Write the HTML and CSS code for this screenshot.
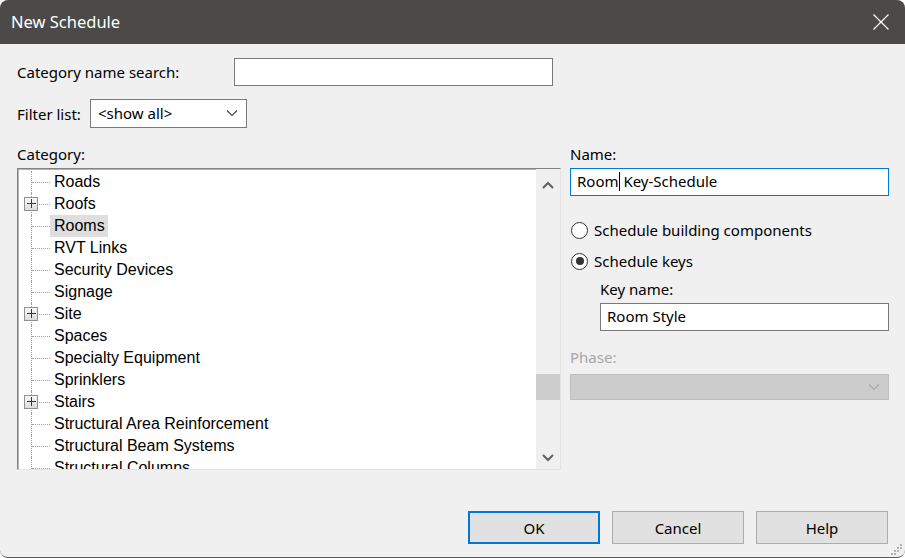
FILE: index.html
```html
<!DOCTYPE html>
<html>
<head>
<meta charset="utf-8">
<title>New Schedule</title>
<link rel="stylesheet" href="styles.css">
</head>
<body>
<div class="window">
  <div class="titlebar">
    <span class="title">New Schedule</span>
    <svg class="close" width="16" height="16" viewBox="0 0 16 16"><path d="M0.5 0.5 L15.5 15.5 M15.5 0.5 L0.5 15.5" stroke="#ffffff" stroke-width="1.2" fill="none"/></svg>
  </div>
  <div class="content">
    <div class="row-search">
      <span class="lbl lbl-search">Category name search:</span>
      <div class="textbox search"></div>
    </div>
    <div class="row-filter">
      <span class="lbl lbl-filter">Filter list:</span>
      <div class="combo filter">
        <span>&lt;show all&gt;</span>
        <svg width="12" height="8" viewBox="0 0 12 8"><path d="M1 1.5 L6 6.5 L11 1.5" stroke="#444" stroke-width="1.1" fill="none"/></svg>
      </div>
    </div>
    <div class="main">
      <div class="col-left">
        <div class="lbl cap">Category:</div>
        <div class="tree">
          <div class="list">
            <div class="node"><span class="branch"><span class="hline"></span></span><span class="text">Roads</span></div>
            <div class="node"><span class="branch"><span class="plus"></span><span class="hline"></span></span><span class="text">Roofs</span></div>
            <div class="node"><span class="branch"><span class="hline"></span></span><span class="text selected">Rooms</span></div>
            <div class="node"><span class="branch"><span class="hline"></span></span><span class="text">RVT Links</span></div>
            <div class="node"><span class="branch"><span class="hline"></span></span><span class="text">Security Devices</span></div>
            <div class="node"><span class="branch"><span class="hline"></span></span><span class="text">Signage</span></div>
            <div class="node"><span class="branch"><span class="plus"></span><span class="hline"></span></span><span class="text">Site</span></div>
            <div class="node"><span class="branch"><span class="hline"></span></span><span class="text">Spaces</span></div>
            <div class="node"><span class="branch"><span class="hline"></span></span><span class="text">Specialty Equipment</span></div>
            <div class="node"><span class="branch"><span class="hline"></span></span><span class="text">Sprinklers</span></div>
            <div class="node"><span class="branch"><span class="plus"></span><span class="hline"></span></span><span class="text">Stairs</span></div>
            <div class="node"><span class="branch"><span class="hline"></span></span><span class="text">Structural Area Reinforcement</span></div>
            <div class="node"><span class="branch"><span class="hline"></span></span><span class="text">Structural Beam Systems</span></div>
            <div class="node"><span class="branch"><span class="hline"></span></span><span class="text">Structural Columns</span></div>
          </div>
          <div class="scrollbar">
            <div class="sb-btn sb-up"><svg width="12" height="8" viewBox="0 0 12 8"><path d="M1 7 L6 2 L11 7" stroke="#606060" stroke-width="2" fill="none"/></svg></div>
            <div class="sb-track"><div class="sb-thumb"></div></div>
            <div class="sb-btn sb-down"><svg width="12" height="8" viewBox="0 0 12 8"><path d="M1 1 L6 6 L11 1" stroke="#606060" stroke-width="2" fill="none"/></svg></div>
          </div>
        </div>
      </div>
      <div class="col-right">
        <div class="lbl cap">Name:</div>
        <div class="textbox name focused"><span>Room</span><span class="caret"></span><span>&nbsp;Key-Schedule</span></div>
        <div class="radio r1"><span class="dot"></span><span class="lbl">Schedule building components</span></div>
        <div class="radio r2"><span class="dot checked"></span><span class="lbl">Schedule keys</span></div>
        <div class="lbl keylbl">Key name:</div>
        <div class="textbox key"><span>Room Style</span></div>
        <div class="lbl phaselbl">Phase:</div>
        <div class="combo phase">
          <span></span>
          <svg width="12" height="8" viewBox="0 0 12 8"><path d="M1 1.5 L6 6.5 L11 1.5" stroke="#a8a8a8" stroke-width="1.1" fill="none"/></svg>
        </div>
      </div>
    </div>
    <div class="footer">
      <div class="btn default">OK</div>
      <div class="btn">Cancel</div>
      <div class="btn">Help</div>
    </div>
  </div>
  <svg class="grip" width="12" height="12" viewBox="0 0 12 12">
    <rect x="9" y="1" width="2" height="2" fill="#b4b4b4"/>
    <rect x="6" y="4" width="2" height="2" fill="#b4b4b4"/>
    <rect x="9" y="4" width="2" height="2" fill="#b4b4b4"/>
    <rect x="3" y="7" width="2" height="2" fill="#b4b4b4"/>
    <rect x="6" y="7" width="2" height="2" fill="#b4b4b4"/>
    <rect x="0" y="10" width="2" height="2" fill="#b4b4b4"/>
    <rect x="3" y="10" width="2" height="2" fill="#b4b4b4"/>
  </svg>
</div>
</body>
</html>
```

FILE: styles.css
```css
html, body {
  margin: 0;
  padding: 0;
  background: #ffffff;
}

.window {
  position: relative;
  width: 905px;
  height: 558px;
  box-sizing: border-box;
  background: #f0f0f0;
  border-radius: 8px;
  border-bottom: 1px solid #5c5c5c;
  overflow: hidden;
  display: flex;
  flex-direction: column;
  font-family: "Noto Sans", "Open Sans", sans-serif;
  font-size: 15px;
  color: #000;
}

.titlebar {
  height: 44px;
  flex: 0 0 44px;
  background: #4b4a48;
  display: flex;
  align-items: center;
  justify-content: space-between;
  padding: 0 16px 0 11px;
}

.title {
  color: #ffffff;
  font-size: 16.5px;
  padding-bottom: 1px;
}

.close {
  display: block;
  margin-bottom: 1px;
}

.content {
  flex: 1;
  display: flex;
  flex-direction: column;
  padding: 14px 0 13px 17px;
}

.lbl {
  line-height: 20px;
  white-space: nowrap;
}

.row-search {
  display: flex;
  align-items: center;
  height: 28px;
}

.lbl-search {
  width: 217px;
}

.textbox {
  box-sizing: border-box;
  height: 28px;
  background: #ffffff;
  border: 1px solid #7a7a7a;
  display: flex;
  align-items: center;
  padding: 0 0 2px 6px;
  white-space: pre;
}

.search {
  width: 319px;
}

.row-filter {
  display: flex;
  align-items: center;
  margin-top: 13px;
  height: 29px;
}

.lbl-filter {
  width: 73px;
}

.combo {
  box-sizing: border-box;
  display: flex;
  align-items: center;
  justify-content: space-between;
  border: 1px solid #7a7a7a;
  background: #ffffff;
  padding: 0 8px 1px 7px;
}

.combo svg {
  display: block;
}

.filter {
  width: 157px;
  height: 29px;
}

.main {
  display: grid;
  grid-template-columns: 544px 319px;
  column-gap: 9px;
  margin-top: 16px;
}

.cap {
  height: 20px;
  margin-bottom: 4px;
}

.tree {
  box-sizing: border-box;
  height: 302px;
  background: #ffffff;
  border-top: 1px solid #828282;
  border-left: 1px solid #828282;
  border-right: 1px solid #e3e3e3;
  border-bottom: 1px solid #e3e3e3;
  box-shadow: inset 1px 1px 0 #b4b4b4;
  display: flex;
  overflow: hidden;
}

.list {
  flex: 1;
  padding-top: 2px;
  font-family: "Liberation Sans", Arial, sans-serif;
  font-size: 16px;
}

.node {
  display: flex;
  height: 22px;
  align-items: stretch;
}

.branch {
  position: relative;
  margin-left: 13px;
  width: 18px;
  border-left: 1px dotted #a0a0a0;
  display: flex;
  align-items: center;
}

.hline {
  display: block;
  width: 18px;
  border-top: 1px dotted #a0a0a0;
}

.plus {
  position: absolute;
  left: -8px;
  top: 4px;
  width: 14px;
  height: 14px;
  box-sizing: border-box;
  border: 1px solid #919191;
  background: linear-gradient(#f7f7f7, #dcdcdc);
}

.plus::before,
.plus::after {
  content: "";
  position: absolute;
  background: #1f3a6e;
}

.plus::before {
  left: 2px;
  top: 5px;
  width: 9px;
  height: 1px;
}

.plus::after {
  left: 6px;
  top: 1px;
  width: 1px;
  height: 9px;
}

.text {
  line-height: 22px;
  padding: 0 3px 0 4px;
  white-space: nowrap;
}

.selected {
  background: #dedede;
}

.scrollbar {
  width: 24px;
  flex: 0 0 24px;
  background: #f0f0f0;
  display: flex;
  flex-direction: column;
}

.sb-btn {
  display: flex;
  align-items: center;
  justify-content: center;
}

.sb-up {
  height: 31px;
}

.sb-down {
  height: 22px;
}

.sb-track {
  flex: 1;
}

.sb-thumb {
  margin-top: 174px;
  height: 26px;
  background: #cdcdcd;
}

.col-right {
  display: flex;
  flex-direction: column;
}

.name {
  width: 319px;
  border-color: #0078d7;
}

.caret {
  display: inline-block;
  width: 1px;
  height: 19px;
  background: #000;
}

.radio {
  display: flex;
  align-items: center;
  height: 22px;
}

.r1 {
  margin-top: 23px;
}

.r2 {
  margin-top: 9px;
}

.dot {
  box-sizing: border-box;
  width: 17px;
  height: 17px;
  border: 1px solid #333333;
  border-radius: 50%;
  background: #ffffff;
  margin: 0 6px 0 1px;
  display: flex;
  align-items: center;
  justify-content: center;
}

.dot.checked::after {
  content: "";
  width: 8px;
  height: 8px;
  border-radius: 50%;
  background: #333333;
}

.keylbl {
  margin: 7px 0 0 30px;
}

.key {
  width: 289px;
  margin: 4px 0 0 30px;
}

.phaselbl {
  margin-top: 16px;
  color: #a6a6a6;
}

.phase {
  width: 319px;
  height: 26px;
  margin-top: 7px;
  background: #cccccc;
  border-color: #bfbfbf;
}

.footer {
  margin-top: auto;
  display: flex;
  justify-content: flex-end;
  gap: 12px;
  padding-right: 17px;
}

.btn {
  box-sizing: border-box;
  width: 132px;
  height: 33px;
  background: #e1e1e1;
  border: 1px solid #adadad;
  display: flex;
  align-items: center;
  justify-content: center;
}

.btn.default {
  border: 2px solid #0078d7;
}

.grip {
  position: absolute;
  right: 2px;
  bottom: 2px;
}
```
